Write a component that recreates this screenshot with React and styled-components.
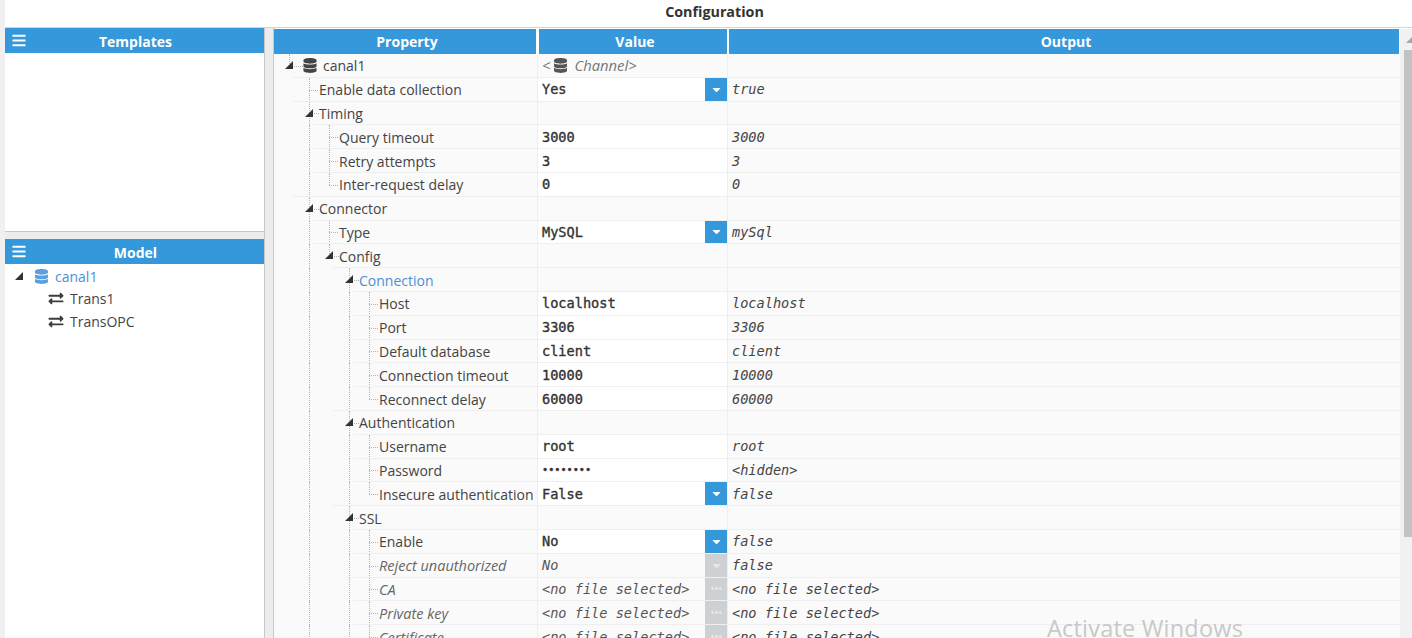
import React from "react";
import styled, { createGlobalStyle } from "styled-components";
import { FaBars, FaCaretDown, FaDatabase, FaEllipsisH, FaExchangeAlt } from "react-icons/fa";

const GlobalStyle = createGlobalStyle`
  html, body {
    margin: 0;
    padding: 0;
    background: #f0f0f0;
    overflow: hidden;
  }
  * {
    box-sizing: border-box;
  }
`;

const Page = styled.div`
  position: relative;
  width: 1412px;
  height: 638px;
  overflow: hidden;
  display: flex;
  flex-direction: column;
  padding-left: 5px;
  font-family: "Open Sans", "Noto Sans", sans-serif;
  font-size: 14px;
  color: #444;
`;

const TitleBar = styled.div`
  height: 28px;
  flex: none;
  background: #fff;
  border-bottom: 1px solid #d4d4d4;
  display: flex;
  align-items: center;
  justify-content: center;
  padding-left: 12px;
  padding-bottom: 5px;
  font-size: 14.3px;
  font-weight: 700;
  color: #333;
`;

const Workspace = styled.div`
  flex: 1;
  min-height: 0;
  display: flex;
`;

const Sidebar = styled.div`
  width: 259px;
  flex: none;
  display: flex;
  flex-direction: column;
`;

const SidePanel = styled.div`
  height: ${(p) => p.$height};
  flex: ${(p) => (p.$grow ? 1 : "none")};
  background: #fff;
  display: flex;
  flex-direction: column;
`;

const PanelSplitter = styled.div`
  height: 8px;
  flex: none;
  background: #ececec;
  border-top: 1px solid #c8c8c8;
`;

const VerticalSplitter = styled.div`
  width: 10px;
  flex: none;
  background: #ececec;
  border-left: 1px solid #c8c8c8;
  border-right: 1px solid #c8c8c8;
`;

const PanelHeader = styled.div`
  position: relative;
  height: 25px;
  flex: none;
  background: #3498db;
  color: #fff;
  font-weight: 700;
  font-size: 14px;
  display: flex;
  align-items: center;
  justify-content: center;
  padding: 2px 0 0 2px;
  svg {
    position: absolute;
    left: 7px;
    top: 5px;
    width: 14px;
    height: 15px;
  }
`;

const ModelTree = styled.div`
  padding-top: 1px;
  display: flex;
  flex-direction: column;
`;

const ModelRow = styled.div`
  height: 22.5px;
  display: flex;
  align-items: center;
  padding-left: ${(p) => p.$indent}px;
  gap: 6px;
  color: ${(p) => (p.$active ? "#4a90d9" : "#444")};
`;

const Arrow = styled.svg`
  width: 8px;
  height: 8px;
  flex: none;
  fill: #333;
`;

const ModelDb = styled(FaDatabase)`
  width: 13px;
  height: 15px;
  color: #5a9fe0;
  margin-left: 6px;
  margin-right: 1px;
`;

const ModelLink = styled(FaExchangeAlt)`
  width: 16px;
  height: 15px;
  color: #3c3c3c;
`;

const GridPanel = styled.div`
  flex: 1;
  min-width: 0;
  display: flex;
  background: #fff;
`;

const GridMain = styled.div`
  width: 1126px;
  flex: none;
  display: flex;
  flex-direction: column;
  padding-top: 1px;
`;

const GridHead = styled.div`
  display: grid;
  grid-template-columns: 264px 190px 672px;
  height: 25px;
  flex: none;
`;

const HeadCell = styled.div`
  background: #3498db;
  color: #fff;
  font-weight: 700;
  font-size: 14px;
  margin-left: ${(p) => (p.$first ? "0" : "1px")};
  margin-right: ${(p) => (p.$first ? "2px" : "1px")};
  padding-left: 4px;
  display: flex;
  align-items: center;
  justify-content: center;
`;

const GridBody = styled.div`
  flex: 1;
  min-height: 0;
  overflow: hidden;
  background: #fafafa;
`;

const Row = styled.div`
  display: grid;
  grid-template-columns: 264px 190px 672px;
  height: 23.8px;
`;

const TreeCell = styled.div`
  position: relative;
  display: flex;
  align-items: center;
  padding-left: ${(p) => 25 + p.$level * 20}px;
  border-right: 1px solid #eeeeee;
  white-space: nowrap;
  font-style: ${(p) => (p.$off ? "italic" : "normal")};
  font-size: ${(p) => (p.$off ? "14.5px" : "14px")};
  color: ${(p) => (p.$accent ? "#4a90d9" : p.$off ? "#666" : "#444")};
`;

const Rule = styled.span`
  position: absolute;
  right: 0;
  bottom: 0;
  height: 1px;
  background: #efefef;
  left: ${(p) => p.$left}px;
`;

const GuideLine = styled.span`
  position: absolute;
  top: 0;
  left: ${(p) => p.$left}px;
  height: ${(p) => (p.$half ? "50%" : "100%")};
  border-left: 1px dotted #b4b4b4;
`;

const GuideTick = styled.span`
  position: absolute;
  top: 50%;
  left: ${(p) => p.$left}px;
  width: ${(p) => p.$width}px;
  border-top: 1px dotted #b4b4b4;
`;

const Expander = styled.svg`
  position: absolute;
  top: 7px;
  left: ${(p) => p.$left}px;
  width: 8px;
  height: 8px;
  fill: #333;
`;

const RootDb = styled(FaDatabase)`
  width: 14px;
  height: 15px;
  color: #444;
  margin-left: 4px;
  margin-right: 6px;
`;

const ValueCell = styled.div`
  display: flex;
  align-items: center;
  padding-left: 4px;
  background: ${(p) => (p.$plain ? "#fafafa" : "#fff")};
  border-right: 1px solid #eeeeee;
  border-bottom: 1px solid #efefef;
  font-family: "DejaVu Sans Mono", "Liberation Mono", monospace;
  font-size: 13.6px;
  font-weight: 400;
  -webkit-text-stroke: 0.35px #333;
  color: #333;
  ${(p) =>
    p.$off &&
    `
    background: #fafafa;
    -webkit-text-stroke: 0;
    font-style: italic;
    color: #555;
  `}
`;

const ChannelTag = styled.div`
  display: flex;
  align-items: center;
  gap: 4px;
  font-family: "Open Sans", "Noto Sans", sans-serif;
  font-size: 14.8px;
  font-style: italic;
  -webkit-text-stroke: 0;
  color: #777;
  svg {
    width: 13px;
    height: 15px;
    color: #555;
    margin-right: 3px;
  }
`;

const ValueText = styled.span`
  flex: 1;
  white-space: nowrap;
  font-size: ${(p) => (p.$secret ? "10.2px" : "inherit")};
`;

const EditButton = styled.div`
  width: 22px;
  height: 100%;
  flex: none;
  display: flex;
  align-items: center;
  justify-content: center;
  background: ${(p) => (p.$off ? "#ced1d3" : "#3498db")};
  color: ${(p) => (p.$off ? "#e4e6e7" : "#fff")};
  -webkit-text-stroke: 0;
  svg {
    width: ${(p) => (p.$dots ? "11px" : "9px")};
    height: 13px;
  }
`;

const OutputCell = styled.div`
  display: flex;
  align-items: center;
  padding-left: 4px;
  border-bottom: 1px solid #efefef;
  font-family: "DejaVu Sans Mono", "Liberation Mono", monospace;
  font-size: 13.6px;
  font-style: italic;
  color: #444;
`;

const Scrollbar = styled.div`
  flex: 1;
  background: #f1f1f1;
  display: flex;
  flex-direction: column;
  align-items: flex-end;
  padding-top: 8px;
  margin-top: 1px;
`;

const ScrollArrow = styled.svg`
  width: 6px;
  height: 6px;
  fill: #a8a8a8;
`;

const ScrollThumb = styled.div`
  width: 8px;
  height: 487px;
  margin-top: 7px;
  background: #c2c2c2;
`;

const Watermark = styled.div`
  position: absolute;
  left: 1047px;
  top: 612px;
  font-family: "Open Sans", "Noto Sans", sans-serif;
  font-size: 23.5px;
  letter-spacing: 0.2px;
  color: #c8c8c8;
  white-space: nowrap;
`;

const rows = [
  { label: "canal1", level: 0, open: true, root: true },
  { label: "Enable data collection", level: 1, value: "Yes", output: "true", button: "drop" },
  { label: "Timing", level: 1, open: true },
  { label: "Query timeout", level: 2, value: "3000", output: "3000" },
  { label: "Retry attempts", level: 2, value: "3", output: "3" },
  { label: "Inter-request delay", level: 2, value: "0", output: "0", last: true },
  { label: "Connector", level: 1, open: true },
  { label: "Type", level: 2, value: "MySQL", output: "mySql", button: "drop" },
  { label: "Config", level: 2, open: true, last: true },
  { label: "Connection", level: 3, open: true, accent: true },
  { label: "Host", level: 4, value: "localhost", output: "localhost" },
  { label: "Port", level: 4, value: "3306", output: "3306" },
  { label: "Default database", level: 4, value: "client", output: "client" },
  { label: "Connection timeout", level: 4, value: "10000", output: "10000" },
  { label: "Reconnect delay", level: 4, value: "60000", output: "60000", last: true },
  { label: "Authentication", level: 3, open: true },
  { label: "Username", level: 4, value: "root", output: "root" },
  { label: "Password", level: 4, value: "••••••••", output: "<hidden>", secret: true },
  { label: "Insecure authentication", level: 4, value: "False", output: "false", button: "drop", last: true },
  { label: "SSL", level: 3, open: true },
  { label: "Enable", level: 4, value: "No", output: "false", button: "drop" },
  { label: "Reject unauthorized", level: 4, value: "No", output: "false", button: "drop", off: true },
  { label: "CA", level: 4, value: "<no file selected>", output: "<no file selected>", button: "dots", off: true },
  { label: "Private key", level: 4, value: "<no file selected>", output: "<no file selected>", button: "dots", off: true },
  { label: "Certificate", level: 4, value: "<no file selected>", output: "<no file selected>", button: "dots", off: true },
];

const guideX = (level) => 15 + level * 20;

const ruleStart = (row) => {
  if (row.open) return 19 + row.level * 20;
  if (row.last) return 19 + (row.level - 2) * 20;
  return 19 + (row.level - 1) * 20;
};

const Triangle = () => <polygon points="8,0 8,8 0,8" />;

const TreeGuides = ({ row }) => {
  const lines = [];
  for (let k = 1; k <= row.level; k++) {
    if (k === row.level || k === 1 || k === 3) {
      lines.push(<GuideLine key={k} $left={guideX(k)} $half={k === row.level && row.last} />);
    }
  }
  return (
    <>
      {row.root && <GuideLine $left={guideX(0)} $half />}
      {lines}
      {row.open ? (
        <>
          <GuideTick $left={guideX(row.level) + 3} $width={row.root ? 11 : 7} />
          <Expander $left={guideX(row.level) - 4} viewBox="0 0 8 8">
            <Triangle />
          </Expander>
        </>
      ) : (
        <GuideTick $left={guideX(row.level)} $width={9} />
      )}
      <Rule $left={ruleStart(row)} />
    </>
  );
};

const PropertyRow = ({ row }) => (
  <Row>
    <TreeCell $level={row.level} $off={row.off} $accent={row.accent}>
      <TreeGuides row={row} />
      {row.root && <RootDb />}
      {row.label}
    </TreeCell>
    <ValueCell $plain={row.value === undefined} $off={row.off}>
      {row.root && (
        <ChannelTag>
          &lt;
          <FaDatabase />
          Channel&gt;
        </ChannelTag>
      )}
      <ValueText $secret={row.secret}>{row.value}</ValueText>
      {row.button && (
        <EditButton $off={row.off} $dots={row.button === "dots"}>
          {row.button === "drop" ? <FaCaretDown /> : <FaEllipsisH />}
        </EditButton>
      )}
    </ValueCell>
    <OutputCell>{row.output}</OutputCell>
  </Row>
);

const App = () => (
  <Page>
    <GlobalStyle />
    <TitleBar>Configuration</TitleBar>
    <Workspace>
      <Sidebar>
        <SidePanel $height="203px">
          <PanelHeader>
            <FaBars />
            Templates
          </PanelHeader>
        </SidePanel>
        <PanelSplitter />
        <SidePanel $grow>
          <PanelHeader>
            <FaBars />
            Model
          </PanelHeader>
          <ModelTree>
            <ModelRow $indent={10} $active>
              <Arrow viewBox="0 0 8 8">
                <Triangle />
              </Arrow>
              <ModelDb />
              canal1
            </ModelRow>
            <ModelRow $indent={43}>
              <ModelLink />
              Trans1
            </ModelRow>
            <ModelRow $indent={43}>
              <ModelLink />
              TransOPC
            </ModelRow>
          </ModelTree>
        </SidePanel>
      </Sidebar>
      <VerticalSplitter />
      <GridPanel>
        <GridMain>
          <GridHead>
            <HeadCell $first>Property</HeadCell>
            <HeadCell>Value</HeadCell>
            <HeadCell>Output</HeadCell>
          </GridHead>
          <GridBody>
            {rows.map((row) => (
              <PropertyRow key={row.label + row.level} row={row} />
            ))}
          </GridBody>
        </GridMain>
        <Scrollbar>
          <ScrollArrow viewBox="0 0 6 6">
            <polygon points="6,0 6,6 0,6" />
          </ScrollArrow>
          <ScrollThumb />
        </Scrollbar>
      </GridPanel>
    </Workspace>
    <Watermark>Activate Windows</Watermark>
  </Page>
);

export default App;
